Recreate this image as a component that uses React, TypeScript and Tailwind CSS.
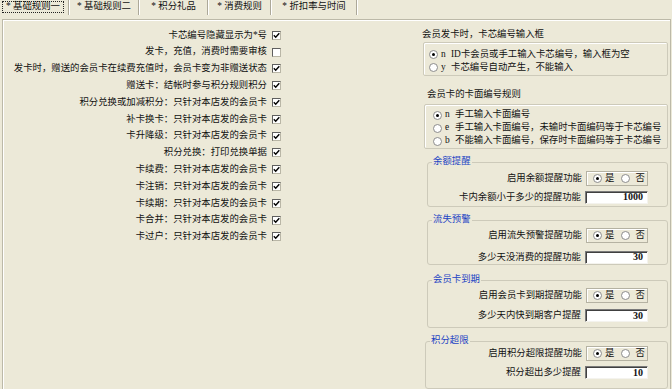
import React from 'react'

const leftRows: [string, boolean][] = [
  ['卡芯编号隐藏显示为*号', true],
  ['发卡，充值，消费时需要审核', false],
  ['发卡时，赠送的会员卡在续费充值时，会员卡变为非赠送状态', true],
  ['赠送卡：结帐时参与积分规则积分', true],
  ['积分兑换或加减积分：只针对本店发的会员卡', true],
  ['补卡换卡：只针对本店发的会员卡', true],
  ['卡升降级：只针对本店发的会员卡', true],
  ['积分兑换：打印兑换单据', true],
  ['卡续费：只针对本店发的会员卡', true],
  ['卡注销：只针对本店发的会员卡', true],
  ['卡续期：只针对本店发的会员卡', true],
  ['卡合并：只针对本店发的会员卡', true],
  ['卡过户：只针对本店发的会员卡', true],
]

function CheckBox({ checked }: { checked: boolean }) {
  return (
    <span className="w-[9px] h-[9px] shrink-0 flex items-center justify-center bg-white border border-t-[#5f5f5f] border-l-[#5f5f5f] border-b-[#b9b6a6] border-r-[#b9b6a6]">
      {checked && (
        <svg width="7" height="7" viewBox="0 0 7 7">
          <path d="M0.8 3.3 L2.7 5.3 L6.3 1.2" fill="none" stroke="#000" strokeWidth="1.4" />
        </svg>
      )}
    </span>
  )
}

function Radio({ on = false }: { on?: boolean }) {
  return (
    <span className="w-[9px] h-[9px] shrink-0 rounded-full bg-white border border-[#8c8c8c] flex items-center justify-center">
      {on && <span className="w-[3px] h-[3px] rounded-full bg-black" />}
    </span>
  )
}

function RadioLine({ on = false, letter, text }: { on?: boolean; letter: string; text: string }) {
  return (
    <div className="h-[13px] flex items-center">
      <Radio on={on} />
      <span className="ml-[3px] w-[10px]">{letter}</span>
      <span>{text}</span>
    </div>
  )
}

function YesNo() {
  return (
    <div className="w-[62px] h-[15px] flex items-center pl-[6px] border border-[#b5b2a2] shadow-[inset_1px_1px_0_#fff]">
      <Radio on />
      <span className="ml-[3px]">是</span>
      <span className="ml-[7px]"><Radio /></span>
      <span className="ml-[5px]">否</span>
    </div>
  )
}

function NumBox({ value }: { value: string }) {
  return (
    <div className="w-[63px] h-[13px] flex items-center justify-end pr-[4px] bg-white border border-t-[#7a7a7a] border-l-[#7a7a7a] border-b-[#f4f3ee] border-r-[#f4f3ee] shadow-[inset_1px_1px_0_#404040] font-bold text-[10px]">
      {value}
    </div>
  )
}

type GroupProps = {
  title: string
  label1: string
  label2: string
  value: string
  className: string
  rowClass: string
  gapClass: string
}

function Group({ title, label1, label2, value, className, rowClass, gapClass }: GroupProps) {
  return (
    <div className={`relative border border-[#cdcaba] rounded-[3px] ${className}`}>
      <span className="absolute left-[4px] -top-[7px] px-[1px] h-[12px] flex items-center bg-[#ece9d8] text-[#1d44c4]">
        {title}
      </span>
      <div className={`flex justify-end items-center gap-[4px] pr-[19px] h-[15px] ${rowClass}`}>
        <span>{label1}</span>
        <YesNo />
      </div>
      <div className={`flex justify-end items-center gap-[4px] pr-[19px] h-[13px] ${gapClass}`}>
        <span>{label2}</span>
        <NumBox value={value} />
      </div>
    </div>
  )
}

const tabs = [
  { label: '* 基础规则二', w: 'w-[68px]' },
  { label: '* 积分礼品', w: 'w-[67px]' },
  { label: '* 消费规则', w: 'w-[61px]' },
  { label: '* 折扣率与时间', w: 'w-[84px]' },
]

export default function App() {
  return (
    <div className="w-[672px] h-[389px] overflow-hidden bg-[#ece9d8] text-[#111] text-[9.4px] leading-none [font-family:'Liberation_Serif','Noto_Sans_CJK_SC',serif]">
      {/* tab strip */}
      <div className="h-[19px] flex items-start">
        <div className="ml-[2px] mt-[1px] w-[62px] h-[12px] flex items-center justify-center border border-dotted border-[#222]">
          * 基础规则一
        </div>
        <div className="ml-[4px] w-[1px] h-[15px] bg-[#aca899] border-r border-white box-content" />
        {tabs.map(t => (
          <React.Fragment key={t.label}>
            <div className={`${t.w} h-[14px] flex items-center justify-center`}>{t.label}</div>
            <div className="w-[1px] h-[15px] bg-[#aca899] border-r border-white box-content" />
          </React.Fragment>
        ))}
      </div>

      {/* panel */}
      <div className="ml-[2px] w-[669px] h-[370px] flex border-l border-t border-r border-[#bcb9a8] shadow-[inset_1px_1px_0_#fff]">
        <div className="w-[278px] pt-[7px] flex flex-col items-end">
          {leftRows.map(([text, checked]) => (
            <div key={text} className="h-[16.8px] flex items-center gap-[5px]">
              <span>{text}</span>
              <CheckBox checked={checked} />
            </div>
          ))}
        </div>

        <div className="ml-[141px] w-[246px] pt-[8px] flex flex-col">
          <div className="h-[15px] flex items-center">会员发卡时，卡芯编号输入框</div>
          <div className="ml-[1px] h-[35px] pt-[5px] pl-[5px] border border-[#cdcaba] rounded-[2px] shadow-[inset_1px_1px_0_#fff]">
            <RadioLine on letter="n" text="ID卡会员或手工输入卡芯编号，输入框为空" />
            <RadioLine letter="y" text="卡芯编号自动产生，不能输入" />
          </div>

          <div className="mt-[11px] ml-[5px] h-[15px] flex items-center">会员卡的卡面编号规则</div>
          <div className="mt-[2px] ml-[2px] h-[47px] pt-[4px] pl-[8px] border border-[#cdcaba] rounded-[2px] shadow-[inset_1px_1px_0_#fff]">
            <RadioLine on letter="n" text="手工输入卡面编号" />
            <RadioLine letter="e" text="手工输入卡面编号，未输时卡面编码等于卡芯编号" />
            <RadioLine letter="b" text="不能输入卡面编号，保存时卡面编码等于卡芯编号" />
          </div>

          <Group
            className="mt-[13px] ml-[5px] h-[47px]"
            rowClass="mt-[8px]"
            gapClass="mt-[5px]"
            title="余额提醒"
            label1="启用余额提醒功能"
            label2="卡内余额小于多少的提醒功能"
            value="1000"
          />
          <Group
            className="mt-[13px] ml-[5px] h-[47px]"
            rowClass="mt-[7px]"
            gapClass="mt-[8px]"
            title="流失预警"
            label1="启用流失预警提醒功能"
            label2="多少天没消费的提醒功能"
            value="30"
          />
          <Group
            className="mt-[15px] ml-[5px] h-[50px]"
            rowClass="mt-[7px]"
            gapClass="mt-[6px]"
            title="会员卡到期"
            label1="启用会员卡到期提醒功能"
            label2="多少天内快到期客户提醒"
            value="30"
          />
          <Group
            className="mt-[13px] ml-[3px] h-[50px]"
            rowClass="mt-[4px]"
            gapClass="mt-[5px]"
            title="积分超限"
            label1="启用积分超限提醒功能"
            label2="积分超出多少提醒"
            value="10"
          />
        </div>
      </div>
    </div>
  )
}
